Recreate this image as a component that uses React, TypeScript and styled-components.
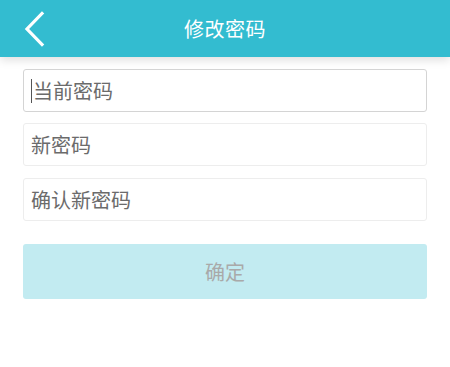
import React from "react";
import styled, { createGlobalStyle } from "styled-components";

const Global = createGlobalStyle`
  html, body { margin: 0; padding: 0; background: #ffffff; }
  body { font-family: "Noto Sans CJK SC", "Noto Sans", sans-serif; }
`;

const Page = styled.div`
  width: 450px;
  min-height: 367px;
  background: #fff;
`;

const Header = styled.header`
  position: relative;
  height: 57px;
  background: #33bcd0;
  display: flex;
  align-items: center;
  justify-content: center;
  box-shadow: 0 3px 9px rgba(0, 0, 0, 0.13);
  z-index: 1;
`;

const BackButton = styled.button`
  position: absolute;
  left: 20px;
  top: 11px;
  width: 28px;
  height: 36px;
  padding: 0;
  border: none;
  background: transparent;
  display: flex;
  align-items: center;
  justify-content: center;
`;

const Title = styled.h1`
  margin: 0;
  font-size: 20px;
  font-weight: 400;
  color: #ffffff;
  letter-spacing: 0.5px;
`;

const Form = styled.div`
  display: flex;
  flex-direction: column;
  padding: 12px 23px 0;
`;

const Field = styled.div<{ $focused?: boolean }>`
  height: 43px;
  box-sizing: border-box;
  border: 1px solid ${(p) => (p.$focused ? "#d4d4d4" : "#ededed")};
  border-radius: 3px;
  display: flex;
  align-items: center;
  padding-left: 7px;
  margin-bottom: ${(p) => (p.$focused ? "11px" : "12px")};
  font-size: 20px;
  color: #6b6b6b;
`;

const Caret = styled.span`
  display: inline-block;
  width: 1px;
  height: 24px;
  background: #555;
  margin-right: 1px;
`;

const Submit = styled.button`
  margin-top: 11px;
  height: 55px;
  border: none;
  border-radius: 3px;
  background: #c2ebf1;
  color: #a9a9a9;
  font-family: "Noto Sans CJK SC", "Noto Sans", sans-serif;
  font-size: 20px;
`;

export default function App() {
  return (
    <Page>
      <Global />
      <Header>
        <BackButton aria-label="back">
          <svg width="24" height="36" viewBox="0 0 24 36">
            <polyline
              points="20,2.5 5,18 20,33.5"
              fill="none"
              stroke="#fff"
              strokeWidth="3.2"
              strokeLinecap="square"
            />
          </svg>
        </BackButton>
        <Title>修改密码</Title>
      </Header>
      <Form>
        <Field $focused>
          <Caret />
          当前密码
        </Field>
        <Field>新密码</Field>
        <Field>确认新密码</Field>
        <Submit>确定</Submit>
      </Form>
    </Page>
  );
}
